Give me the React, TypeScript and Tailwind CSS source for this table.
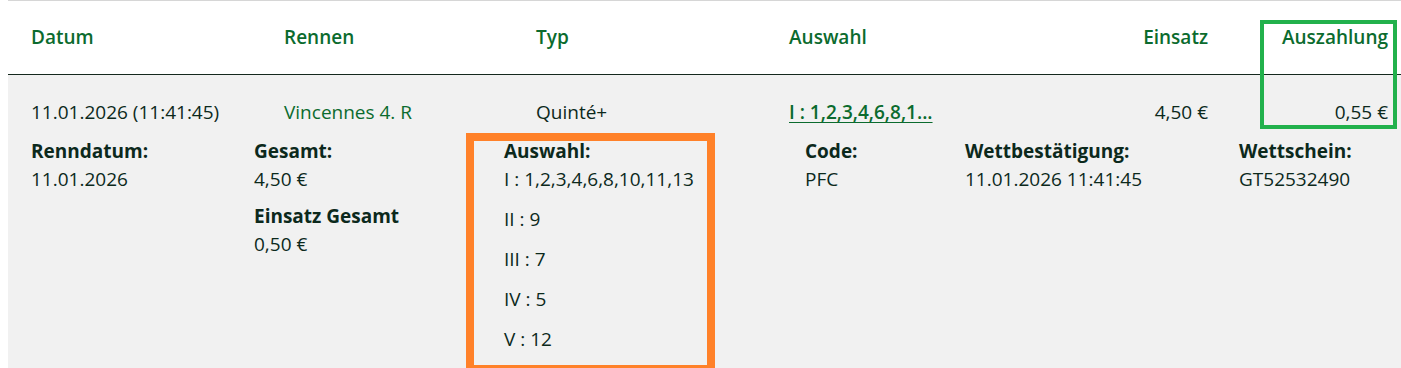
import React from "react";

const headGreen = "text-[#0b6b2e]";
const dark = "text-[#0c291c]";

export default function App() {
  return (
    <div className="relative w-[1401px] h-[368px] overflow-hidden bg-white font-['Open_Sans',sans-serif] text-[19px]">
      <div className="ml-2 border-t border-[#d6d6d6]">
        {/* header */}
        <div className={`flex h-[74px] items-center border-b border-[#14281d] font-semibold ${headGreen}`}>
          <div className="w-[253px] pl-[23px]">Datum</div>
          <div className="w-[252px] pl-[23px]">Rennen</div>
          <div className="w-[253px] pl-[23px]">Typ</div>
          <div className="w-[253px] pl-[23px]">Auswahl</div>
          <div className="w-[189px] text-right">Einsatz</div>
          <div className="w-[180px] text-right">Auszahlung</div>
        </div>
        {/* body */}
        <div className={`bg-[#f1f1f1] ${dark}`}>
          <div className="flex h-[62px] items-center pt-[12px]">
            <div className="w-[253px] pl-[23px]">11.01.2026 (11:41:45)</div>
            <div className="w-[252px] pl-[23px] text-[#0b6b2e]">Vincennes 4. R</div>
            <div className="w-[253px] pl-[23px]">Quinté+</div>
            <div className="w-[253px] pl-[23px]">
              <span className="font-semibold text-[#0b6b2e] underline underline-offset-[3px]">I : 1,2,3,4,6,8,1...</span>
            </div>
            <div className="w-[189px] text-right">4,50 €</div>
            <div className="w-[180px] text-right">0,55 €</div>
          </div>
          <div className="flex h-[231px] leading-[28px]">
            <div className="w-[246px] pl-[23px]">
              <div className="font-bold">Renndatum:</div>
              <div>11.01.2026</div>
            </div>
            <div className="w-[250px]">
              <div className="font-bold">Gesamt:</div>
              <div>4,50 €</div>
              <div className="mt-[9px] font-bold">Einsatz Gesamt</div>
              <div>0,50 €</div>
            </div>
            <div className="w-[301px]">
              <div className="font-bold">Auswahl:</div>
              <div className="flex flex-col gap-[12px]">
                <div>I : 1,2,3,4,6,8,10,11,13</div>
                <div>II : 9</div>
                <div>III : 7</div>
                <div>IV : 5</div>
                <div>V : 12</div>
              </div>
            </div>
            <div className="w-[160px]">
              <div className="font-bold">Code:</div>
              <div>PFC</div>
            </div>
            <div className="w-[274px]">
              <div className="font-bold">Wettbestätigung:</div>
              <div>11.01.2026 11:41:45</div>
            </div>
            <div>
              <div className="font-bold">Wettschein:</div>
              <div>GT52532490</div>
            </div>
          </div>
        </div>
      </div>
      {/* annotation overlays */}
      <div className="absolute left-[1260px] top-[20px] h-[109px] w-[137px] border-4 border-[#22b14c]" />
      <div className="absolute left-[466px] top-[133px] h-[240px] w-[249px] border-[8px] border-[#ff8129]" />
    </div>
  );
}
